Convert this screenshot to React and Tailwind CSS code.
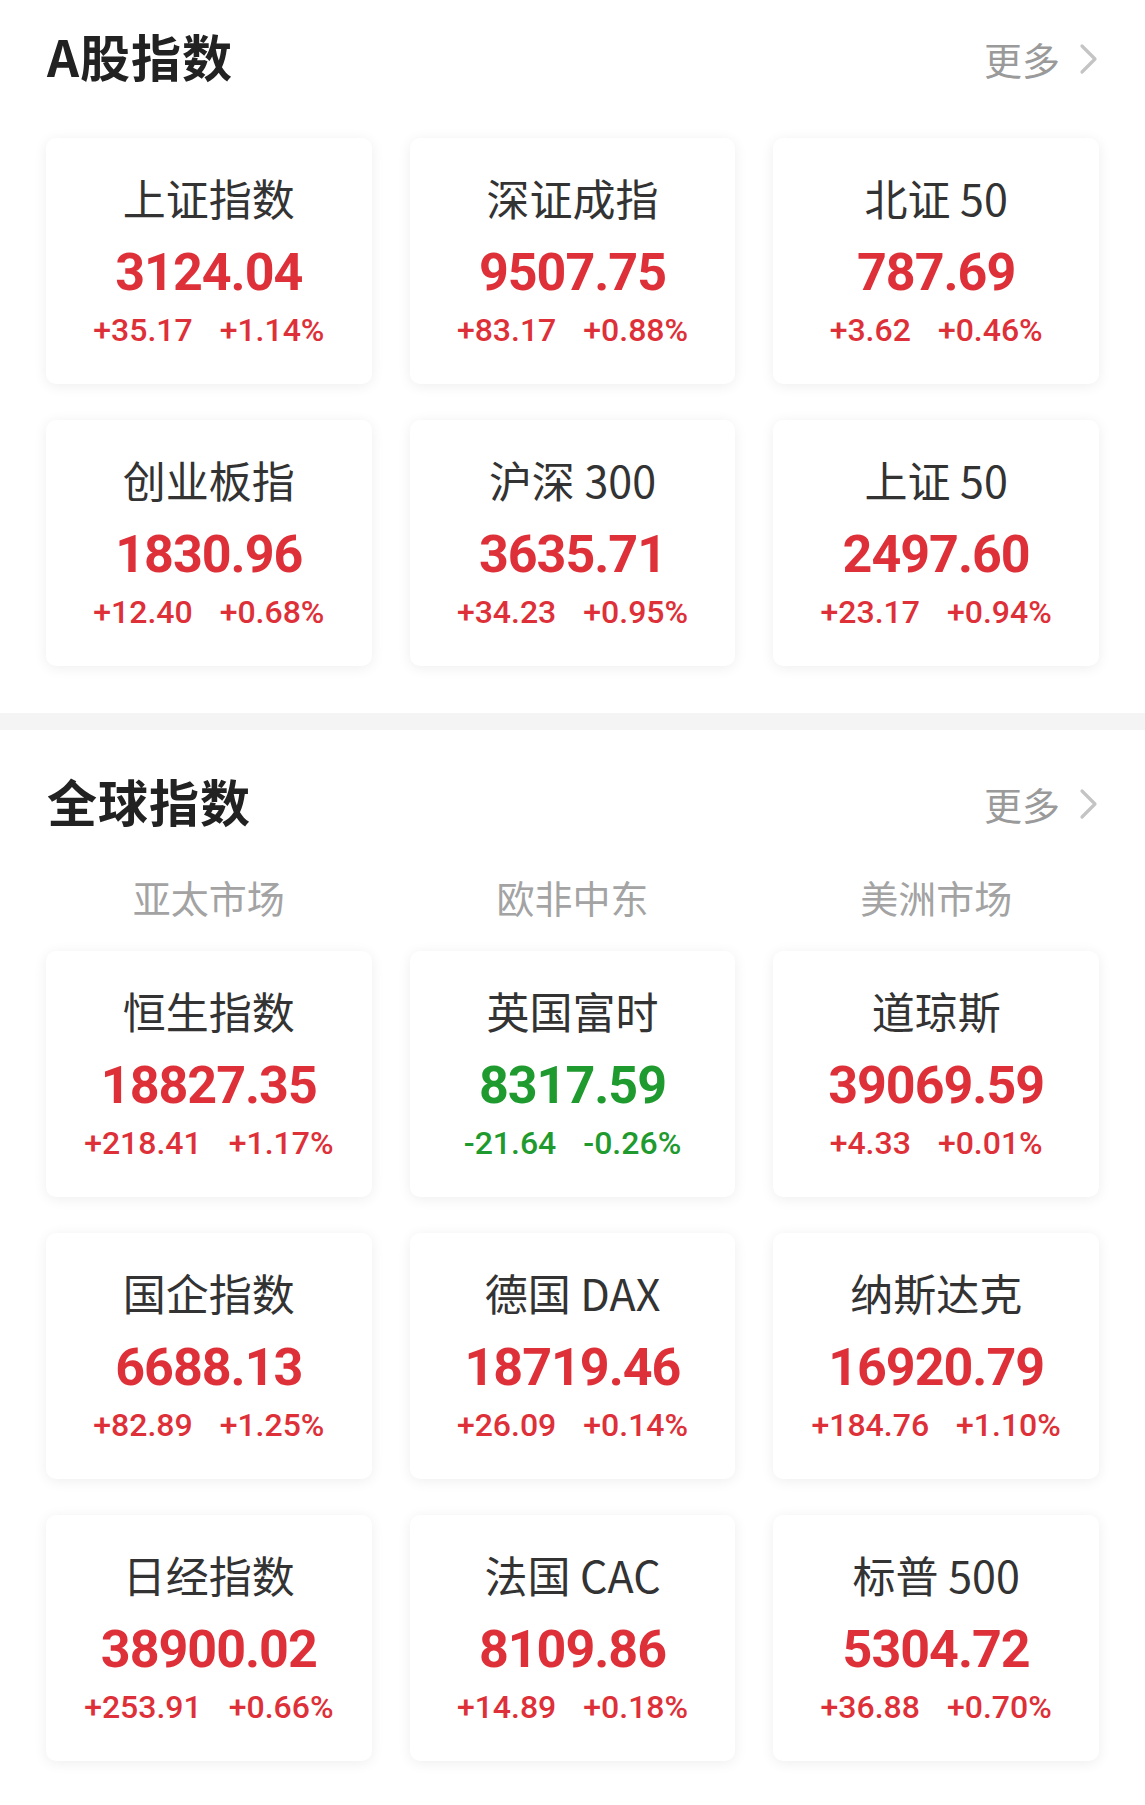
import React from 'react';

const A_SHARES = [
  { name: '上证指数', value: '3124.04', diff: '+35.17', pct: '+1.14%' },
  { name: '深证成指', value: '9507.75', diff: '+83.17', pct: '+0.88%' },
  { name: '北证 50', value: '787.69', diff: '+3.62', pct: '+0.46%' },
  { name: '创业板指', value: '1830.96', diff: '+12.40', pct: '+0.68%' },
  { name: '沪深 300', value: '3635.71', diff: '+34.23', pct: '+0.95%' },
  { name: '上证 50', value: '2497.60', diff: '+23.17', pct: '+0.94%' },
];

const GLOBAL = [
  { name: '恒生指数', value: '18827.35', diff: '+218.41', pct: '+1.17%' },
  { name: '英国富时', value: '8317.59', diff: '-21.64', pct: '-0.26%', down: true },
  { name: '道琼斯', value: '39069.59', diff: '+4.33', pct: '+0.01%' },
  { name: '国企指数', value: '6688.13', diff: '+82.89', pct: '+1.25%' },
  { name: '德国 DAX', value: '18719.46', diff: '+26.09', pct: '+0.14%' },
  { name: '纳斯达克', value: '16920.79', diff: '+184.76', pct: '+1.10%' },
  { name: '日经指数', value: '38900.02', diff: '+253.91', pct: '+0.66%' },
  { name: '法国 CAC', value: '8109.86', diff: '+14.89', pct: '+0.18%' },
  { name: '标普 500', value: '5304.72', diff: '+36.88', pct: '+0.70%' },
];

const CJK = { fontFamily: '"Noto Sans CJK SC", "Noto Sans", sans-serif' };
const NUM = { fontFamily: 'Roboto, "Liberation Sans", sans-serif' };

function SectionHeader({ title }) {
  return (
    <div className="flex items-center justify-between h-[50px]">
      <h2 className="text-[50px] leading-none font-bold tracking-[1px] text-[#222] pl-[1px]" style={CJK}>
        {title}
      </h2>
      <div className="flex items-center gap-[18px] pt-[8px]">
        <span className="text-[38px] leading-none text-[#9a9a9a]" style={CJK}>更多</span>
        <svg width="21" height="32" viewBox="0 0 21 32" fill="none">
          <path d="M4 3 L17 16 L4 29" stroke="#c4c4c4" strokeWidth="3.2" strokeLinecap="round" strokeLinejoin="round" />
        </svg>
      </div>
    </div>
  );
}

function IndexCard({ item }) {
  const color = item.down ? 'text-[#1f9a2f]' : 'text-[#de3038]';
  return (
    <div className="h-[246px] rounded-[10px] bg-white shadow-[0_2px_14px_rgba(0,0,0,0.07)] flex flex-col items-center pt-[38px]">
      <div className="text-[43px] leading-none text-[#333]" style={CJK}>{item.name}</div>
      <div className={`mt-[28px] text-[52px] leading-none font-bold tracking-[-1px] ${color}`} style={NUM}>
        {item.value}
      </div>
      <div className={`mt-[15px] flex gap-[27px] text-[32px] leading-none font-medium ${color}`} style={NUM}>
        <span>{item.diff}</span>
        <span>{item.pct}</span>
      </div>
    </div>
  );
}

export default function App() {
  return (
    <div className="w-[1145px] min-h-[1805px] bg-white">
      <section className="px-[46px] pt-[30px] pb-[47px]">
        <SectionHeader title="A股指数" />
        <div className="mt-[58px] grid grid-cols-3 gap-x-[38px] gap-y-[36px]">
          {A_SHARES.map((it) => (
            <IndexCard key={it.name} item={it} />
          ))}
        </div>
      </section>

      <div className="h-[17px] bg-[#f4f4f4]" />

      <section className="px-[46px] pt-[45px] pb-[44px]">
        <SectionHeader title="全球指数" />
        <div className="mt-[53px] grid grid-cols-3 gap-x-[38px]">
          {['亚太市场', '欧非中东', '美洲市场'].map((t) => (
            <div key={t} className="text-center text-[38px] leading-none text-[#a3a3a3]" style={CJK}>
              {t}
            </div>
          ))}
        </div>
        <div className="mt-[35px] grid grid-cols-3 gap-x-[38px] gap-y-[36px]">
          {GLOBAL.map((it) => (
            <IndexCard key={it.name} item={it} />
          ))}
        </div>
      </section>
    </div>
  );
}
